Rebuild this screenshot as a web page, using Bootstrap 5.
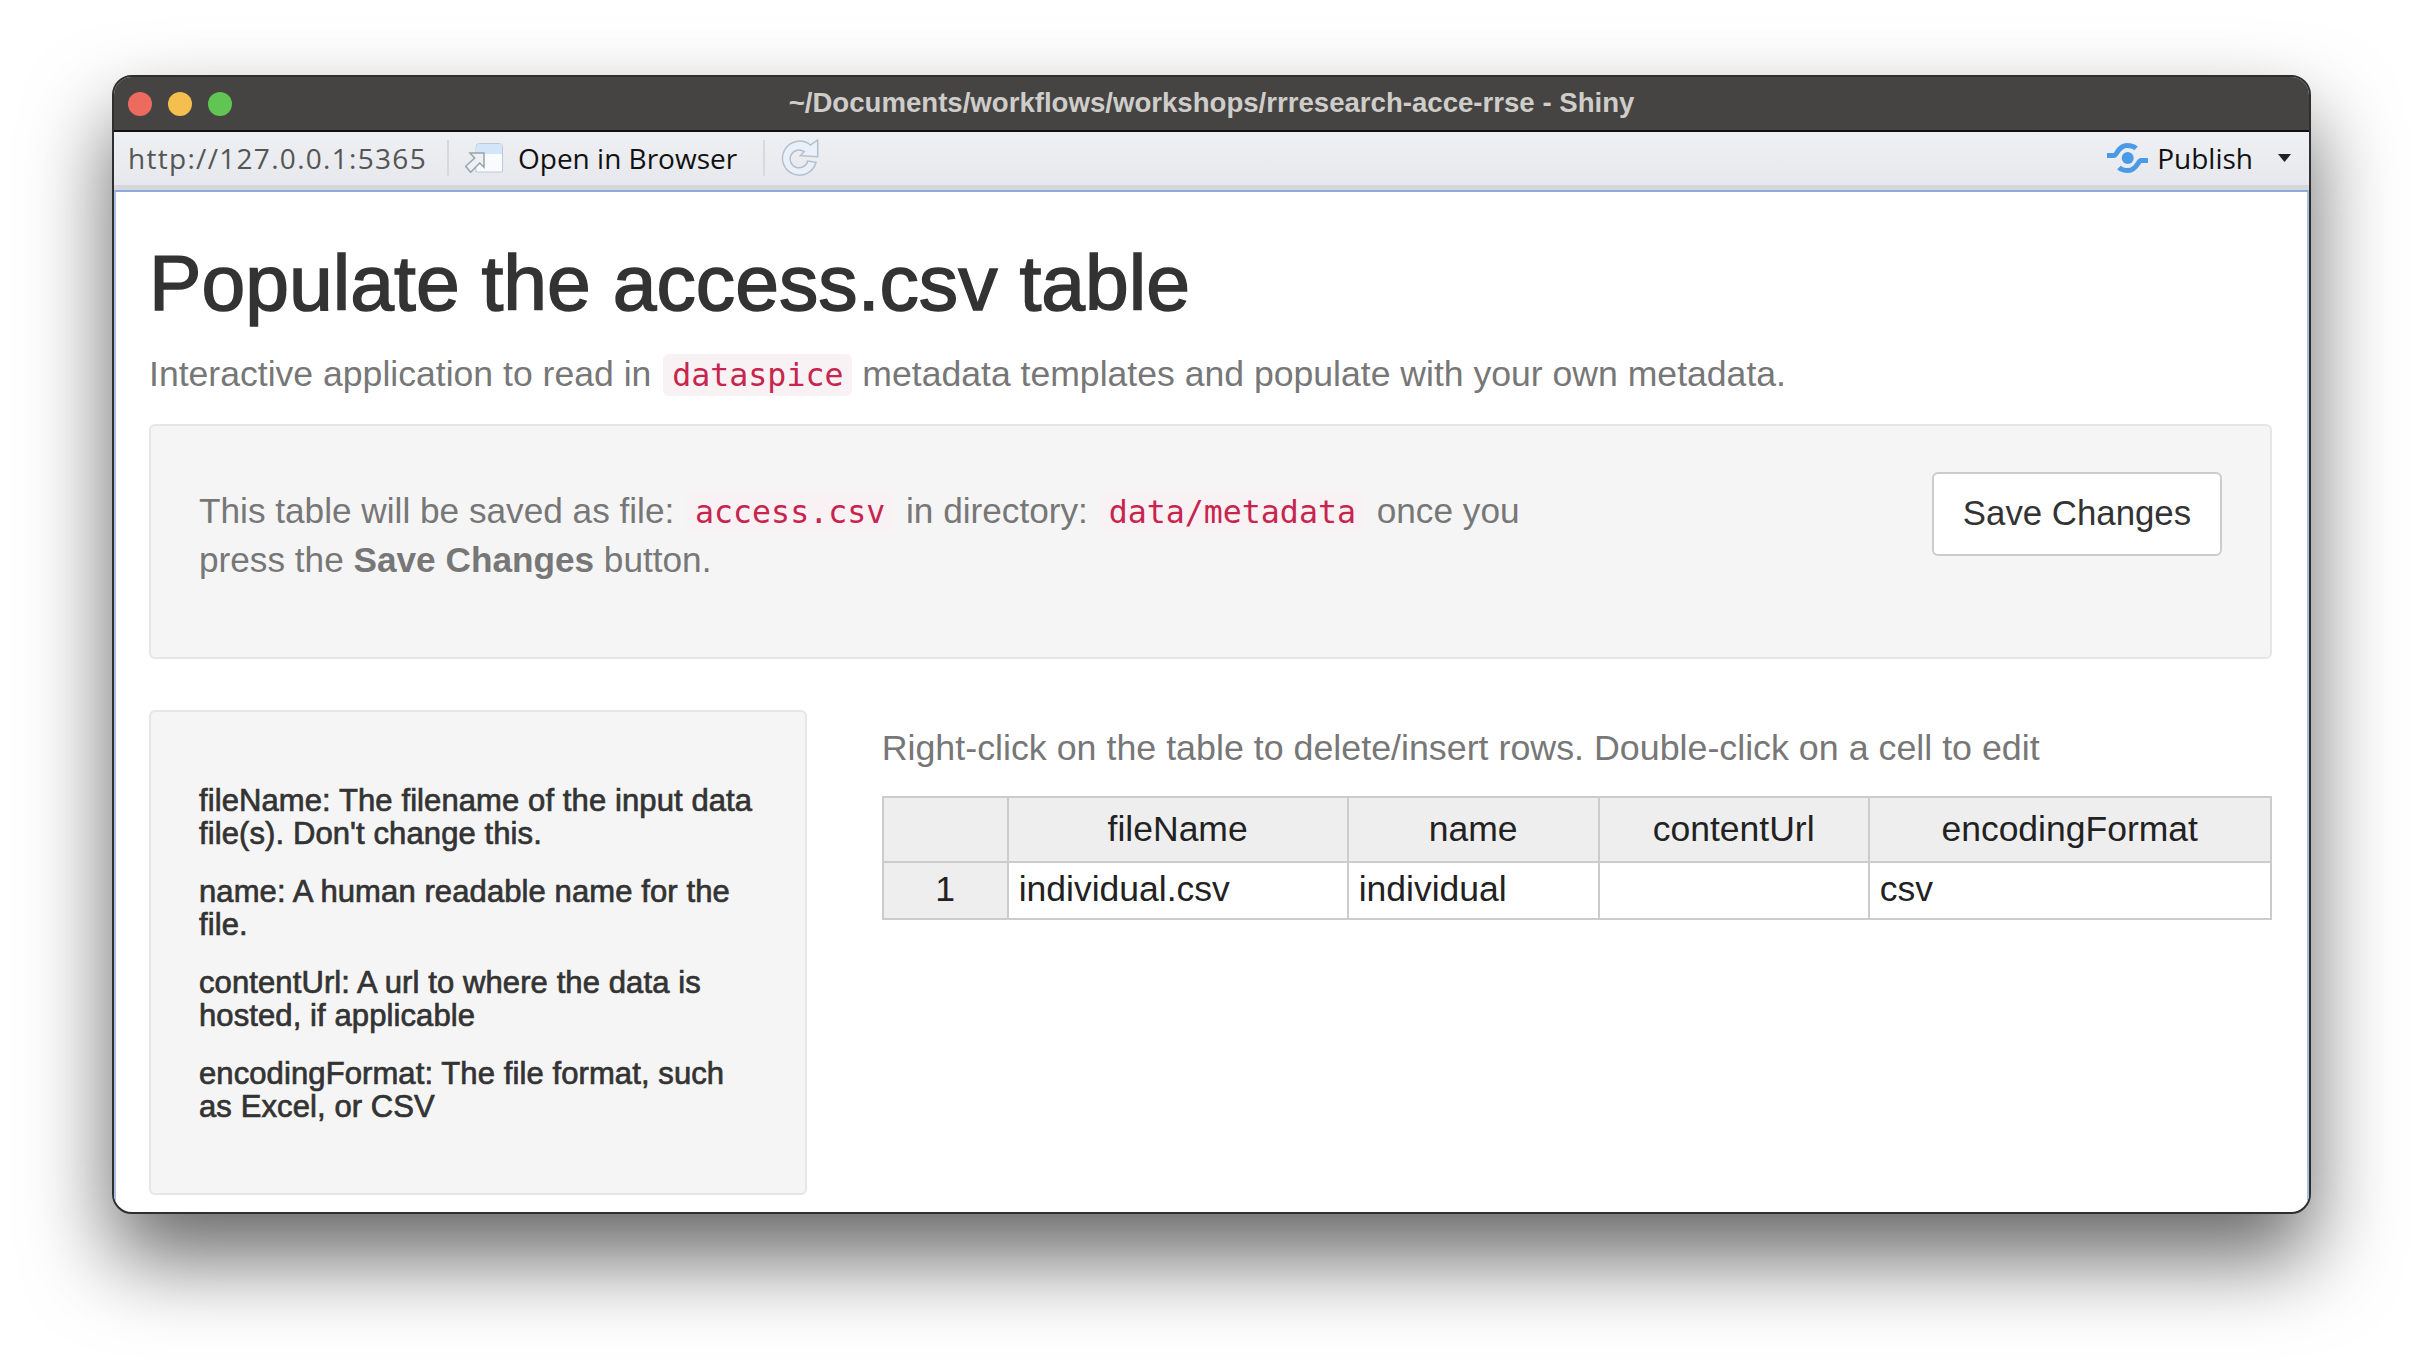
<!DOCTYPE html>
<html lang="en">
<head>
    <meta charset="UTF-8">
    <meta name="viewport" content="width=device-width, initial-scale=1.0">
    <title>Populate the access.csv table</title>
    <link href="https://cdn.jsdelivr.net/npm/bootstrap@5.3.0/dist/css/bootstrap.min.css" rel="stylesheet">
    <style>
        html, body { height: 100%; }
        body {
            background: #fff;
            font-family: "Liberation Sans", Arial, sans-serif;
            padding: 75px 111px 0 112px;
        }
        .app-window {
            height: 1139px;
            border: 2px solid #2e2e2e;
            border-radius: 20px;
            overflow: hidden;
            background: #fff;
            box-shadow: 0 44px 85px rgba(0, 0, 0, .6);
        }
        .title-bar {
            height: 55px;
            background: #454442;
            border-bottom: 2px solid #111;
            color: #cfcdca;
            font-size: 27.6px;
            font-weight: 700;
            position: relative;
            padding-bottom: 2px;
        }
        .traffic { position: absolute; left: 14px; top: 15px; }
        .traffic span { width: 24px; height: 24px; border-radius: 50%; display: block; }
        .tool-bar {
            height: 58px;
            background: linear-gradient(#eef0f3, #e6e8ed);
            border-bottom: 5px solid #d6d7da;
            font-family: "Open Sans", sans-serif;
            font-size: 28px;
            color: #111;
            padding: 0 14px 2px;
        }
        .tool-sep { width: 2px; height: 36px; background: #d7d9de; }
        .url-text { color: #555; letter-spacing: 1.3px; margin-right: 20px; }
        .sep-a { margin-right: 16px; }
        .browser-icon { margin-right: 15px; }
        .browser-text { margin-right: 26px; }
        .sep-b { margin-right: 16px; }
        .publish-group { gap: 9.5px; }
        .publish-caret { margin: 0 4.5px 0 15px; }
        .app-body {
            height: 1024px;
            border-top: 2px solid #8ea9db;
            border-left: 2px solid #a9bfe4;
            border-right: 2px solid #a9bfe4;
            padding: 0 35px 0 33px;
            color: #333;
        }
        h1.page-title {
            font-size: 78.7px;
            font-weight: 500;
            color: #333;
            line-height: 1.1;
            margin: 0;
            padding-top: 48px;
            -webkit-text-stroke: 1.5px #333;
        }
        .sub-text { font-size: 35.6px; color: #777; line-height: 50px; margin: 22px 0 0; }
        .sub-text code.inline-code { margin-right: 0; }
        .grey-panel {
            background: #f5f5f5;
            border: 2px solid #e6e6e6;
            border-radius: 6px;
            color: #777;
        }
        .save-panel { height: 235px; margin-top: 24px; padding: 46px 48px; font-size: 35.2px; line-height: 48px; }
        .save-copy { margin-top: 15.5px; }
        code.inline-code {
            font-family: "DejaVu Sans Mono", monospace;
            font-size: 31.6px;
            color: #c7254e;
            background: #f9f2f4;
            padding: 3px 9px;
            border-radius: 6px;
            margin: 0 2px;
        }
        .save-btn {
            font-size: 34.8px;
            color: #333;
            background: #fff;
            border: 2px solid #ccc;
            border-radius: 6px;
            width: 290px;
            height: 84px;
            padding: 0;
        }
        .lower-row { --bs-gutter-x: 75px; margin-top: 51px; }
        .help-panel { height: 485px; padding: 72px 48px 0; font-size: 31px; line-height: 33px; color: #333; letter-spacing: .1px; -webkit-text-stroke: .7px #333; }
        .help-panel p { margin: 0 0 25px; }
        .table-hint { font-size: 35.8px; color: #777; line-height: 50px; margin: 13px 0 23px; }
        table.sheet { font-size: 35.5px; color: #222; table-layout: fixed; width: 1388px; margin: 0; border-color: #ccc; }
        table.sheet th, table.sheet td { border: 2px solid #ccc; padding: 0 10px; font-weight: 400; vertical-align: middle; }
        table.sheet th { background: #eee; text-align: center; }
        table.sheet thead th { height: 65px; padding-top: 2px; }
        table.sheet tbody th, table.sheet td { height: 57px; }
    </style>
</head>
<body>
    <div class="app-window">
        <!-- title bar -->
        <div class="title-bar d-flex align-items-center justify-content-center">
            <div class="traffic d-flex gap-3">
                <span style="background:#ed6a5e"></span>
                <span style="background:#f5bf4f"></span>
                <span style="background:#61c554"></span>
            </div>
            ~/Documents/workflows/workshops/rrresearch-acce-rrse - Shiny
        </div>

        <!-- toolbar -->
        <div class="tool-bar d-flex align-items-center">
            <span class="url-text">http://127.0.0.1:5365</span>
            <span class="tool-sep sep-a"></span>
            <svg class="browser-icon" width="38" height="30" viewBox="0 0 38 30">
                <path d="M11 4a3.500 3.500 0 0 1 3.500-3.500h20a3.500 3.500 0 0 1 3 3.500v25H11z" fill="#fafbfd" stroke="#bcc8d6"/>
                <path d="M11.500 4a3 3 0 0 1 3-3h19.500a3 3 0 0 1 3 3v7H11.500z" fill="#d3e5f8"/>
                <path d="M5 10h14v14.300L14.700 20l-9 9.300-5-6L9.700 15z" fill="#eef1f4" stroke="#98a3ad" stroke-width="1.500"/>
            </svg>
            <span class="browser-text">Open in Browser</span>
            <span class="tool-sep sep-b"></span>
            <svg width="38" height="37" viewBox="0 0 38 37">
                <path d="M29.300 6A17 17 0 1 0 35 23.300L26.700 22A8.900 8.900 0 1 1 23.300 12.700L19.300 16.700 36.700 17.700V1z" fill="#e9f0fa" stroke="#b4bfcd" stroke-width="1.500"/>
            </svg>
            <span class="ms-auto d-flex align-items-center publish-group">
                <svg width="41" height="30" viewBox="0 0 41 30">
                    <circle cx="20.700" cy="15" r="6" fill="#4a9be6"/>
                    <path d="M0 12.500h7c3 0 4-10 13-10 4 0 7 1 9 3M41 17.500h-7c-3 0-4 10-13 10-4 0-7-1-9-3" fill="none" stroke="#4a9be6" stroke-width="5"/>
                </svg>
                <span>Publish</span>
                <svg class="publish-caret" width="13" height="8" viewBox="0 0 13 8"><path d="M0 0h13L6.500 8z" fill="#222"/></svg>
            </span>
        </div>

        <!-- app content -->
        <div class="app-body">
            <h1 class="page-title">Populate the access.csv table</h1>
            <p class="sub-text">Interactive application to read in <code class="inline-code">dataspice</code> metadata templates and populate with your own metadata.</p>

            <div class="grey-panel save-panel row mx-0">
                <div class="col-8 p-0 save-copy">
                    This table will be saved as file: <code class="inline-code">access.csv</code> in directory: <code class="inline-code">data/metadata</code> once you<br>
                    press the <strong>Save Changes</strong> button.
                </div>
                <div class="col-4 p-0 text-end">
                    <button type="button" class="btn save-btn">Save Changes</button>
                </div>
            </div>

            <div class="row lower-row">
                <div class="col-4">
                    <div class="grey-panel help-panel">
                        <p>fileName: The filename of the input data file(s). Don't change this.</p>
                        <p>name: A human readable name for the file.</p>
                        <p>contentUrl: A url to where the data is hosted, if applicable</p>
                        <p>encodingFormat: The file format, such as Excel, or CSV</p>
                    </div>
                </div>
                <div class="col-8">
                    <p class="table-hint">Right-click on the table to delete/insert rows. Double-click on a cell to edit</p>
                    <table class="table sheet">
                        <colgroup>
                            <col style="width:125px"><col style="width:340px"><col style="width:251px"><col style="width:270px"><col style="width:402px">
                        </colgroup>
                        <thead>
                            <tr><th></th><th>fileName</th><th>name</th><th>contentUrl</th><th>encodingFormat</th></tr>
                        </thead>
                        <tbody>
                            <tr><th>1</th><td>individual.csv</td><td>individual</td><td></td><td>csv</td></tr>
                        </tbody>
                    </table>
                </div>
            </div>
        </div>
    </div>
    <script src="https://cdn.jsdelivr.net/npm/bootstrap@5.3.0/dist/js/bootstrap.bundle.min.js"></script>
</body>
</html>
